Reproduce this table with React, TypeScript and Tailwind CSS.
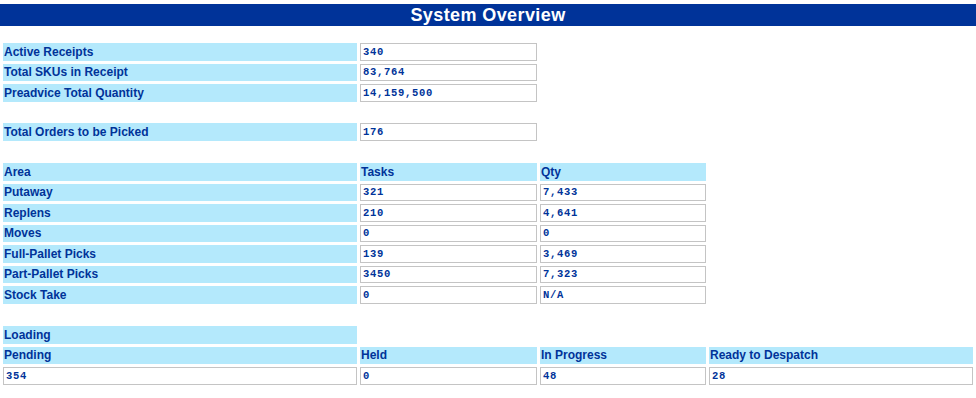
const label = 'bg-[#b4e9fc] text-[#003399] font-bold text-[12px] leading-none flex items-center pl-[1px] whitespace-nowrap';
const value =
    'bg-white border border-[#c4c4c4] text-[#003399] font-bold text-[10.5px] tracking-[0.7px] leading-none flex items-center pl-[2px] [font-family:"Liberation_Mono",monospace]';

const Section = ({ children, className = '' }: { children: React.ReactNode; className?: string }) => (
    <div className={`grid grid-cols-[354px_177px_166px_1fr] auto-rows-[17.5px] gap-[3px] px-[3px] ${className}`}>
        {children}
    </div>
);

const Empty = () => <div />;

const receipts = [
    ['Active Receipts', '340'],
    ['Total SKUs in Receipt', '83,764'],
    ['Preadvice Total Quantity', '14,159,500'],
];

const areas = [
    ['Putaway', '321', '7,433'],
    ['Replens', '210', '4,641'],
    ['Moves', '0', '0'],
    ['Full-Pallet Picks', '139', '3,469'],
    ['Part-Pallet Picks', '3450', '7,323'],
    ['Stock Take', '0', 'N/A'],
];

export default function App() {
    return (
        <div className="w-[976px] h-[398px] bg-white [font-family:'Liberation_Sans',Arial,sans-serif] overflow-hidden">
            <div className="mt-[4px] h-[22px] bg-[#003399] flex items-center justify-center">
                <h1 className="text-white font-bold text-[18px] tracking-[0.4px] leading-none">System Overview</h1>
            </div>

            <Section className="mt-[17px]">
                {receipts.map(([name, val]) => (
                    <>
                        <div key={name} className={label}>{name}</div>
                        <div className={value}>{val}</div>
                        <Empty />
                        <Empty />
                    </>
                ))}
            </Section>

            <Section className="mt-[21.5px]">
                <div className={label}>Total Orders to be Picked</div>
                <div className={value}>176</div>
                <Empty />
                <Empty />
            </Section>

            <Section className="mt-[22.5px]">
                <div className={label}>Area</div>
                <div className={label}>Tasks</div>
                <div className={label}>Qty</div>
                <Empty />
                {areas.map(([name, tasks, qty]) => (
                    <>
                        <div key={name} className={label}>{name}</div>
                        <div className={value}>{tasks}</div>
                        <div className={value}>{qty}</div>
                        <Empty />
                    </>
                ))}
            </Section>

            <Section className="mt-[22.5px]">
                <div className={label}>Loading</div>
                <Empty />
                <Empty />
                <Empty />
                <div className={label}>Pending</div>
                <div className={label}>Held</div>
                <div className={label}>In Progress</div>
                <div className={label}>Ready to Despatch</div>
                <div className={value}>354</div>
                <div className={value}>0</div>
                <div className={value}>48</div>
                <div className={value}>28</div>
            </Section>
        </div>
    );
}
